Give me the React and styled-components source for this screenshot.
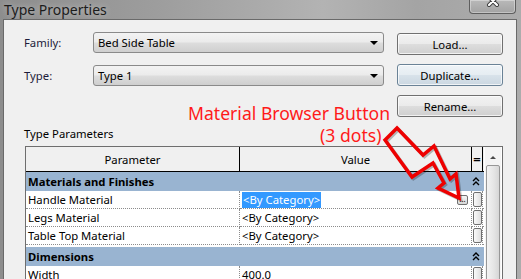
import React from 'react';
import styled, { createGlobalStyle } from 'styled-components';

const ui = `"Noto Sans", "Open Sans", "Liberation Sans", sans-serif`;

const GlobalStyle = createGlobalStyle`
  body {
    margin: 0;
    background: #a6a6a6;
    overflow: hidden;
  }
`;

const Frame = styled.div`
  width: 521px;
  height: 279px;
  box-sizing: border-box;
  overflow: hidden;
  padding: 0 4px 0 3px;
  display: flex;
  flex-direction: column;
  background: linear-gradient(90deg, #8d8d8d 0%, #9d9d9d 30%, #b3b3b3 62%, #a4a4a4 80%, #acacac 100%);
  font-family: ${ui};
`;

const TitleBar = styled.div`
  height: 22px;
  display: flex;
  align-items: flex-start;
`;

const Title = styled.div`
  margin: 1px 0 0 1px;
  font-size: 14px;
  line-height: 18px;
  color: #1c1c1c;
  text-shadow: 0 0 6px rgba(255, 255, 255, 0.5);
`;

const CloseButton = styled.div`
  margin-left: auto;
  margin-right: 1px;
  width: 47px;
  height: 14px;
  box-sizing: border-box;
  border: 1px solid #5e5e5e;
  border-top: none;
  border-radius: 0 0 4px 4px;
  background: linear-gradient(180deg, #b9b9b9, #a3a3a3);
  box-shadow: inset 0 0 0 1px rgba(255, 255, 255, 0.35);
  display: flex;
  justify-content: center;
  align-items: flex-start;
`;

const Client = styled.div`
  position: relative;
  flex: 1;
  background: #f0f0f0;
  border: 1px solid #6a6a6a;
  border-bottom: none;
  padding: 12px 0 0 19px;
  font-size: 11.3px;
  color: #000;
`;

const TopRow = styled.div`
  display: flex;
  gap: 13px;
`;

const Fields = styled.div`
  display: flex;
  flex-direction: column;
  gap: 12px;
`;

const FieldRow = styled.div`
  display: grid;
  grid-template-columns: 70px 291px;
  align-items: center;
  height: 21px;
`;

const Label = styled.span`
  color: #1c1c3a;
  padding-left: 1px;
`;

const Combo = styled.div`
  height: 21px;
  box-sizing: border-box;
  border: 1px solid #8a8a8a;
  border-radius: 3px;
  background: linear-gradient(180deg, #f3f3f3 0%, #ebebeb 48%, #dddddd 52%, #cfcfcf 100%);
  display: flex;
  align-items: center;
  padding: 0 5px 0 4px;
`;

const ComboText = styled.span`
  flex: 1;
`;

const Caret = styled.span`
  width: 0;
  height: 0;
  border-left: 4px solid transparent;
  border-right: 4px solid transparent;
  border-top: 4px solid #000;
`;

const Buttons = styled.div`
  display: flex;
  flex-direction: column;
  gap: 9px;
  padding-top: 1px;
`;

const Button = styled.div`
  width: 106px;
  height: 22px;
  box-sizing: border-box;
  border: 1px solid ${(p) => (p.$focused ? '#6a8296' : '#707070')};
  border-radius: 3px;
  background: ${(p) =>
    p.$focused
      ? 'linear-gradient(180deg, #eef3f7 0%, #e6edf2 48%, #d8e2ea 52%, #cbd7e1 100%)'
      : 'linear-gradient(180deg, #f2f2f2 0%, #ebebeb 48%, #dddddd 52%, #cfcfcf 100%)'};
  box-shadow: inset 0 0 0 1px rgba(255, 255, 255, 0.7);
  display: flex;
  align-items: center;
  justify-content: center;
`;

const SectionLabel = styled.div`
  margin: 9px 0 0 1px;
  line-height: 15px;
`;

const Table = styled.div`
  margin: 5px 0 0 2px;
  width: 478px;
  box-sizing: border-box;
  border: 1px solid #6e6e6e;
  border-bottom: none;
  background: #fff;
  display: flex;
  gap: 1px;
`;

const Grid = styled.div`
  width: 458px;
  display: grid;
  grid-template-columns: 214px 232px 11px 1fr;
  align-content: start;
`;

const HeadCell = styled.div`
  height: 24px;
  background: #f0f0f0;
  border-bottom: 1px solid #000;
  border-right: ${(p) => (p.$last ? 'none' : '1px solid #000')};
  display: flex;
  align-items: center;
  justify-content: center;
  font-size: ${(p) => (p.$eq ? '13px' : 'inherit')};
  font-weight: ${(p) => (p.$eq ? 700 : 400)};
`;

const GroupRow = styled.div`
  grid-column: 1 / -1;
  height: 19px;
  margin-top: ${(p) => (p.$gap ? '2px' : '0')};
  background: #99b4d1;
  display: grid;
  grid-template-columns: 446px 11px 1fr;
  align-items: center;
  font-weight: 700;
`;

const GroupName = styled.span`
  padding-left: 2px;
`;

const Cell = styled.div`
  height: 17px;
  border-bottom: 1px dotted #8c8c8c;
  border-right: ${(p) => (p.$noDivider ? 'none' : '1px dotted #8c8c8c')};
  display: flex;
  align-items: center;
  padding-left: ${(p) => p.$pad || 0}px;
  overflow: hidden;
  white-space: nowrap;
`;

const Selected = styled.span`
  background: #3399ff;
  color: #fff;
  padding: 0 1px;
  line-height: 16px;
`;

const DotsButton = styled.span`
  margin-left: auto;
  margin-right: 3px;
  width: 11px;
  height: 10px;
  box-sizing: border-box;
  border: 1px solid #707070;
  border-radius: 2px;
  background: linear-gradient(180deg, #f4f4f4, #d8d8d8);
  font-size: 8px;
  line-height: 5px;
  text-align: center;
  color: #000;
`;

const MiniButton = styled.span`
  margin-left: 1px;
  width: 9px;
  height: 15px;
  box-sizing: border-box;
  border: 1px solid #6f6f6f;
  border-radius: 2px;
  background: linear-gradient(90deg, #fafafa, #dedede);
`;

const Scrollbar = styled.div`
  width: 16px;
  display: flex;
  flex-direction: column;
  align-items: center;
  background: #f4f4f4;
`;

const ScrollUp = styled.div`
  height: 18px;
  width: 100%;
  display: flex;
  align-items: center;
  justify-content: center;
`;

const UpGlyph = styled.span`
  width: 0;
  height: 0;
  border-left: 3px solid transparent;
  border-right: 3px solid transparent;
  border-bottom: 3px solid #4a4a4a;
  margin-top: 2px;
`;

const Thumb = styled.div`
  width: 14px;
  height: 140px;
  box-sizing: border-box;
  border: 1px solid #979797;
  border-radius: 2px;
  background: linear-gradient(90deg, #f3f3f3, #e4e4e4 60%, #d6d6d6);
`;

const Annotation = styled.div`
  position: absolute;
  left: 184px;
  top: 81px;
  color: #ff1a1a;
  font-size: 17.6px;
`;

const AnnotationLine = styled.div`
  padding-left: ${(p) => p.$indent || 0}px;
  line-height: ${(p) => (p.$tight ? '20px' : '24px')};
`;

const ArrowLayer = styled.svg`
  position: absolute;
  left: 0;
  top: 0;
  pointer-events: none;
`;

const CloseGlyph = () => (
  <svg width="14" height="8" viewBox="0 0 14 8">
    <path d="M3 -3 L11 5 M11 -3 L3 5" stroke="#3a3a3a" strokeWidth="4" strokeLinecap="round" />
    <path d="M3 -3 L11 5 M11 -3 L3 5" stroke="#fff" strokeWidth="2.2" strokeLinecap="round" />
  </svg>
);

const Collapse = () => (
  <svg width="8" height="9" viewBox="0 0 8 9">
    <path d="M1 4 L4 1 L7 4 M1 8 L4 5 L7 8" stroke="#000" strokeWidth="1.4" fill="none" />
  </svg>
);

const arrowPath =
  'M385 143 L397 131 L423 158 L434 149 L450 182 L456 177 L459 201 L438 191 L444 186 L433 166 L412 180 Z';

const rows = [
  { group: 'Materials and Finishes' },
  { name: 'Handle Material', value: '<By Category>', selected: true },
  { name: 'Legs Material', value: '<By Category>' },
  { name: 'Table Top Material', value: '<By Category>' },
  { group: 'Dimensions', gap: true },
  { name: 'Width', value: '400.0' },
];

export default function App() {
  return (
    <>
      <GlobalStyle />
      <Frame>
        <TitleBar>
          <Title>Type Properties</Title>
          <CloseButton>
            <CloseGlyph />
          </CloseButton>
        </TitleBar>
        <Client>
          <TopRow>
            <Fields>
              <FieldRow>
                <Label>Family:</Label>
                <Combo>
                  <ComboText>Bed Side Table</ComboText>
                  <Caret />
                </Combo>
              </FieldRow>
              <FieldRow>
                <Label>Type:</Label>
                <Combo>
                  <ComboText>Type 1</ComboText>
                  <Caret />
                </Combo>
              </FieldRow>
            </Fields>
            <Buttons>
              <Button>Load...</Button>
              <Button $focused>Duplicate...</Button>
              <Button>Rename...</Button>
            </Buttons>
          </TopRow>

          <SectionLabel>Type Parameters</SectionLabel>
          <Table>
            <Grid>
              <HeadCell>Parameter</HeadCell>
              <HeadCell>Value</HeadCell>
              <HeadCell $eq>=</HeadCell>
              <HeadCell $last />
              {rows.map((r) =>
                r.group ? (
                  <GroupRow key={r.group} $gap={r.gap}>
                    <GroupName>{r.group}</GroupName>
                    <Collapse />
                  </GroupRow>
                ) : (
                  <React.Fragment key={r.name}>
                    <Cell $pad={2}>{r.name}</Cell>
                    <Cell $pad={2}>
                      {r.selected ? <Selected>{r.value}</Selected> : r.value}
                      {r.selected && <DotsButton>...</DotsButton>}
                    </Cell>
                    <Cell>
                      <MiniButton />
                    </Cell>
                    <Cell $noDivider />
                  </React.Fragment>
                )
              )}
            </Grid>
            <Scrollbar>
              <ScrollUp>
                <UpGlyph />
              </ScrollUp>
              <Thumb />
            </Scrollbar>
          </Table>

          <Annotation>
            <AnnotationLine>Material Browser Button</AnnotationLine>
            <AnnotationLine $indent={132} $tight>(3 dots)</AnnotationLine>
          </Annotation>

          <ArrowLayer width="514" height="257" viewBox="4 23 514 257">
            <path
              d={arrowPath}
              fill="none"
              stroke="rgba(0,0,0,0.25)"
              strokeWidth="3.5"
              transform="translate(1.5 1.5)"
            />
            <path d={arrowPath} fill="none" stroke="#ee0000" strokeWidth="3.5" />
          </ArrowLayer>
        </Client>
      </Frame>
    </>
  );
}
